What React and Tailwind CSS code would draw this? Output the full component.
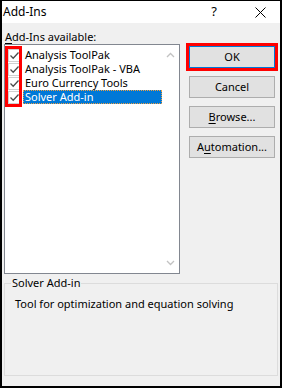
import React from 'react';

const items = [
  { name: 'Analysis ToolPak', checked: true },
  { name: 'Analysis ToolPak - VBA', checked: true },
  { name: 'Euro Currency Tools', checked: true },
  { name: 'Solver Add-in', checked: true, selected: true },
];

const Check = () => (
  <div className="w-[13px] h-[13px] bg-white border border-[#d0d0d0] flex items-center justify-center">
    <svg width="11" height="11" viewBox="0 0 11 11">
      <path d="M1.5 5.5 L4.2 8.2 L9.5 2.5" fill="none" stroke="#4d4d4d" strokeWidth="1.3" />
    </svg>
  </div>
);

const Chevron = ({ up }) => (
  <svg width="9" height="6" viewBox="0 0 9 6">
    <path d={up ? 'M1 5 L4.5 1.5 L8 5' : 'M1 1 L4.5 4.5 L8 1'} fill="none" stroke="#c2c2c2" strokeWidth="1.3" />
  </svg>
);

const Btn = ({ children, def, className = '' }) => (
  <div
    className={
      'h-[22px] flex items-center justify-center bg-[#e1e1e1] border ' +
      (def ? 'border-[#0078d7] ' : 'border-[#adadad] ') +
      className
    }
  >
    {children}
  </div>
);

export default function App() {
  return (
    <div
      className="w-[282px] h-[388px] bg-[#f0f0f0] border-t border-l-2 border-r-2 border-b-2 border-black flex flex-col text-[11px] text-black"
      style={{ fontFamily: '"Noto Sans", "Open Sans", sans-serif' }}
    >
      {/* title bar */}
      <div className="h-[22px] bg-white flex items-center pl-[1px] shrink-0">
        <span className="text-[12px]">Add-Ins</span>
        <span className="ml-auto mr-[38px] text-[13px]">?</span>
        <svg className="mr-[14px]" width="11" height="11" viewBox="0 0 11 11">
          <path d="M0.5 0.5 L10.5 10.5 M10.5 0.5 L0.5 10.5" stroke="#000" strokeWidth="1" />
        </svg>
      </div>

      <div className="flex pl-[2px] pt-[6px]">
        {/* left column */}
        <div className="w-[176px]">
          <div className="h-[15px] leading-[15px] pl-[1px]">
            <span className="underline underline-offset-2">A</span>dd-Ins available:
          </div>
          <div className="h-[230px] bg-white border border-[#828790] flex">
            <div className="relative flex-1 pt-[3px]">
              <div className="absolute left-0 top-[1px] w-[17px] h-[61px] border-[3px] border-[#ff0000]" />
              {items.map((it) => (
                <div key={it.name} className="h-[14px] flex items-center">
                  <div className="w-[18px] flex justify-center pl-[1px]">
                    <Check />
                  </div>
                  <div
                    className={
                      'flex-1 h-[14px] leading-[12px] pl-[1px] ' +
                      (it.selected
                        ? 'bg-[#0078d7] text-white border border-dotted border-[#f0a040]'
                        : 'border border-transparent')
                    }
                  >
                    {it.name}
                  </div>
                </div>
              ))}
            </div>
            <div className="w-[17px] flex flex-col justify-between items-center py-[7px]">
              <Chevron up />
              <Chevron />
            </div>
          </div>
        </div>

        {/* buttons */}
        <div className="ml-[6px] w-[92px] flex flex-col pt-[14px]">
          <div className="border-[3px] border-[#ff0000]">
            <Btn def>OK</Btn>
          </div>
          <div className="px-[3px] flex flex-col">
            <Btn className="mt-[5px]">Cancel</Btn>
            <Btn className="mt-[8px]">
              <span><span className="underline underline-offset-2">B</span>rowse...</span>
            </Btn>
            <Btn className="mt-[8px]">
              <span>A<span className="underline underline-offset-2">u</span>tomation...</span>
            </Btn>
          </div>
        </div>
      </div>

      <fieldset className="mx-[2px] mt-[2px] h-[100px] border border-[#dcdcdc] px-[8px]">
        <legend className="px-[1px] ml-[-2px] leading-[14px]">Solver Add-in</legend>
        <div className="mt-[6px] pl-[2px]">Tool for optimization and equation solving</div>
      </fieldset>
    </div>
  );
}
